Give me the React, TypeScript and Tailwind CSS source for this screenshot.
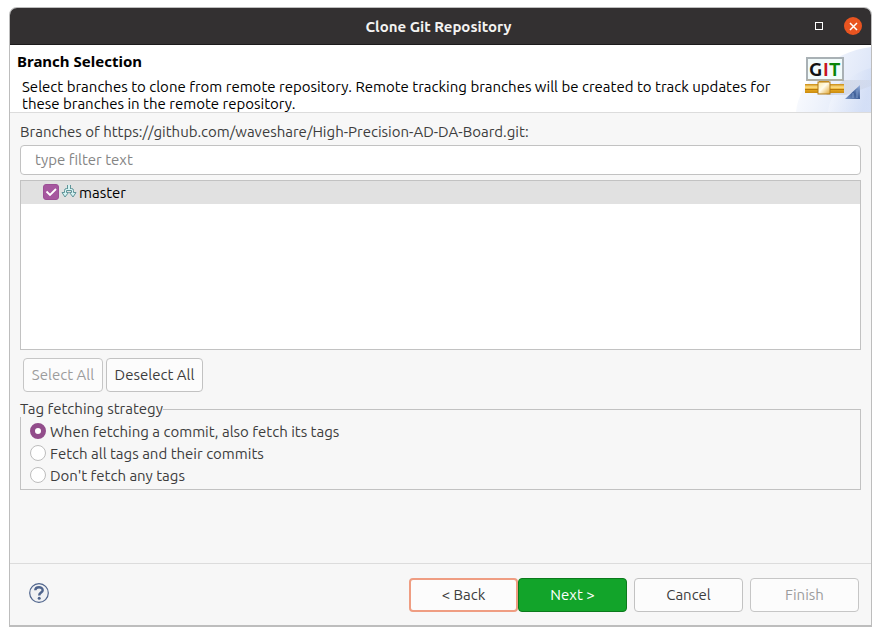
import React, { useState } from "react";

const strategies = [
  "When fetching a commit, also fetch its tags",
  "Fetch all tags and their commits",
  "Don't fetch any tags",
];

const buttonBase = "h-[34px] rounded border bg-[#fcfcfc] pt-px whitespace-nowrap";

function GitBanner() {
  return (
    <svg width="75" height="66" viewBox="0 0 75 66" className="shrink-0 self-end" role="img" aria-label="Git">
      <defs>
        <linearGradient id="sky" x1="0" y1="0" x2="1" y2="0.3">
          <stop offset="0" stopColor="#ffffff" />
          <stop offset="1" stopColor="#cddaf5" />
        </linearGradient>
        <linearGradient id="pipe" x1="0" y1="0" x2="0" y2="1">
          <stop offset="0" stopColor="#c98a10" />
          <stop offset="0.35" stopColor="#ffe08a" />
          <stop offset="0.6" stopColor="#e9a91c" />
          <stop offset="1" stopColor="#c98a10" />
        </linearGradient>
        <linearGradient id="joint" x1="0" y1="0" x2="1" y2="1">
          <stop offset="0" stopColor="#ffe9a0" />
          <stop offset="0.45" stopColor="#fffbea" />
          <stop offset="1" stopColor="#e0a42c" />
        </linearGradient>
        <linearGradient id="corner" x1="0" y1="1" x2="1" y2="0">
          <stop offset="0" stopColor="#7f9ccb" />
          <stop offset="0.5" stopColor="#3f5f98" />
          <stop offset="1" stopColor="#9ab4e0" />
        </linearGradient>
        <linearGradient id="shade" x1="0" y1="0" x2="1" y2="0">
          <stop offset="0" stopColor="#b4b9c8" stopOpacity="0.5" />
          <stop offset="1" stopColor="#c8cede" stopOpacity="0.3" />
        </linearGradient>
      </defs>
      <path d="M0 66C2 38 34 6 75 1V66Z" fill="url(#sky)" opacity="0.65" />
      <path d="M32 66C34 46 52 28 75 22V66Z" fill="url(#sky)" opacity="0.6" />
      <path d="M48 34H75V40L50 49H30Z" fill="url(#shade)" />
      <rect x="11" y="12" width="36" height="22" fill="#f2fbfb" stroke="#a9b1b5" strokeWidth="2" />
      <path d="M11 34H47" fill="none" stroke="#b5ab90" strokeWidth="1" />
      <g fontFamily="Ubuntu, 'Noto Sans', sans-serif" fontWeight="700" fontSize="19">
        <text x="13" y="30" fill="#111111">G</text>
        <text x="27" y="30" fill="#c8141e">I</text>
        <text x="33" y="30" fill="#088408">T</text>
      </g>
      <rect x="23" y="35" width="10" height="3" fill="#d79a20" />
      <rect x="9" y="38" width="39" height="9" fill="url(#pipe)" />
      <path d="M9 43.500H48" stroke="#b87a0c" />
      <rect x="22" y="36" width="12" height="12" fill="url(#joint)" stroke="#b07a18" />
      <path d="M64 39V53H49Z" fill="url(#corner)" />
      <path d="M57 47V52M61 44V52" stroke="#7f9ccb" strokeWidth="1" />
    </svg>
  );
}

function BranchIcon() {
  return (
    <svg width="16" height="16" viewBox="0 0 16 16" aria-hidden="true" className="shrink-0">
      <path d="M6.500 1.500V4.500H5.500Q3.500 4.500 3.500 6.500V8.500H1L4 13L7.500 8.500H5.500V6.500H10.500V8.500H8.500L12 13L15 8.500H12.500V6.500Q12.500 4.500 10.500 4.500H9.500V1.500" fill="#d5f2f2" stroke="#5f9498" />
      <path d="M8 1V6" stroke="#d5f2f2" strokeWidth="2" />
      <path d="M6.500 1V5M9.500 1V5" stroke="#5f9498" />
    </svg>
  );
}

export default function App() {
  const [checked, setChecked] = useState(true);
  const [strategy, setStrategy] = useState(0);
  return (
    <div className="flex min-h-screen flex-col bg-white pt-[7px] pr-[9px] pb-[9px] pl-[9px] font-['Ubuntu','Noto_Sans',sans-serif] text-[15px] text-[#3d3d3d]">
      <main className="flex flex-1 flex-col overflow-hidden rounded-t-lg border border-b-2 border-[#bdbdbd] bg-[#f7f7f7]">
        <header className="grid h-[37px] grid-cols-[1fr_auto_1fr] items-center border-b border-[#1c1a1b] bg-[#333031] pr-1 text-[#f4f3f2]">
          <h1 className="col-start-2 pt-0.5 font-bold">Clone Git Repository</h1>
          <div className="flex items-center justify-end gap-[21px] pr-[5px]">
            <button aria-label="Maximize" className="size-2 border border-white" />
            <button aria-label="Close" className="flex size-[18px] items-center justify-center rounded-full bg-[#e95420]">
              <svg width="9" height="9" viewBox="0 0 9 9" aria-hidden="true">
                <path d="M1 1L8 8M8 1L1 8" stroke="#fff" strokeWidth="1.500" />
              </svg>
            </button>
          </div>
        </header>

        <section className="flex h-[68px] justify-between border-b border-[#dcdcdc] bg-white text-black">
          <div className="pt-2 pl-[7px]">
            <h2 className="font-['Noto_Sans',sans-serif] leading-4 font-bold">Branch Selection</h2>
            <p className="mt-[9px] max-w-[764px] pl-[5px] leading-[17px]">
              Select branches to clone from remote repository. Remote tracking branches will be created to track updates for these branches in the remote repository.
            </p>
          </div>
          <GitBanner />
        </section>

        <section className="flex flex-1 flex-col px-2.5 pt-2.5">
          <label htmlFor="filter" className="leading-[18px]">
            Branches of https://github.com/waveshare/High-Precision-AD-DA-Board.git:
          </label>
          <input
            id="filter"
            placeholder="type filter text"
            className="mt-1 h-[30px] rounded border border-[#c2c2c2] bg-white px-3.5 pb-0.5 placeholder:text-[#858585]"
          />
          <div className="mt-[5px] h-[170px] border border-[#c2c2c2] bg-white text-black">
            <label className="flex h-[23px] items-center bg-[#e1e1e1] pb-px pl-[22px]">
              <span className="grid size-4 place-items-center">
                <input
                  type="checkbox"
                  checked={checked}
                  onChange={() => setChecked(!checked)}
                  className="col-start-1 row-start-1 size-4 appearance-none rounded-[3px] border border-[#c2c2c2] bg-white checked:border-[#9c4f96] checked:bg-[#a6589f]"
                />
                {checked && (
                  <svg width="12" height="12" viewBox="0 0 12 12" aria-hidden="true" className="pointer-events-none col-start-1 row-start-1">
                    <path d="M1.500 5.500L5 9L11 3" fill="none" stroke="#fff" strokeWidth="1.800" />
                  </svg>
                )}
              </span>
              <span className="flex items-center gap-0.5 pl-0.5">
                <BranchIcon />
                <span className="pt-0.5">master</span>
              </span>
            </label>
          </div>

          <div className="mt-2 flex gap-[3px] pl-[3px]">
            <button disabled className={`${buttonBase} w-20 border-[#c6c6c6] text-[#9c9c9c]`}>Select All</button>
            <button className={`${buttonBase} w-[97px] border-[#c2c2c2]`}>Deselect All</button>
          </div>

          <fieldset className="mt-[9px] border border-[#c2c2c2] pt-[3px] pb-[3px] pl-[9px]">
            <legend className="-ml-2.5 bg-[#f7f7f7] leading-4">Tag fetching strategy</legend>
            {strategies.map((name, i) => (
              <label key={name} className="flex h-[22px] items-center gap-1">
                <input
                  type="radio"
                  name="strategy"
                  checked={strategy === i}
                  onChange={() => setStrategy(i)}
                  className="size-4 appearance-none rounded-full border border-[#bdbdbd] bg-white checked:border-[5px] checked:border-[#924d8b]"
                />
                <span className="pt-0.5">{name}</span>
              </label>
            ))}
          </fieldset>
        </section>

        <footer className="flex h-[62px] items-center justify-between border-t border-[#dcdcdc] pr-3 pl-[19px]">
          <button aria-label="Help" className="pb-1">
            <svg width="20" height="20" viewBox="0 0 20 20" aria-hidden="true">
              <circle cx="10" cy="10" r="9.300" fill="#f0f1f3" stroke="#4f648c" strokeWidth="1.200" />
              <path d="M6.300 7.300C6.300 3.200 13.700 3.200 13.700 7.200C13.700 9.500 10.200 9.600 10.200 12.400" fill="none" stroke="#4f648c" strokeWidth="2.400" />
              <circle cx="10.200" cy="15.300" r="1.500" fill="#4f648c" />
            </svg>
          </button>
          <div className="flex gap-[7px]">
            <div className="flex">
              <button className="h-[34px] w-[109px] rounded border-2 border-[#ef9d82] bg-[#fcfcfc] pt-px">&lt; Back</button>
              <button className="h-[34px] w-[109px] rounded border border-[#0b7a1c] bg-[#12a42a] pt-px text-white">Next &gt;</button>
            </div>
            <button className={`${buttonBase} w-[109px] border-[#c2c2c2]`}>Cancel</button>
            <button disabled className={`${buttonBase} w-[109px] border-[#c6c6c6] text-[#9c9c9c]`}>Finish</button>
          </div>
        </footer>
      </main>
    </div>
  );
}
